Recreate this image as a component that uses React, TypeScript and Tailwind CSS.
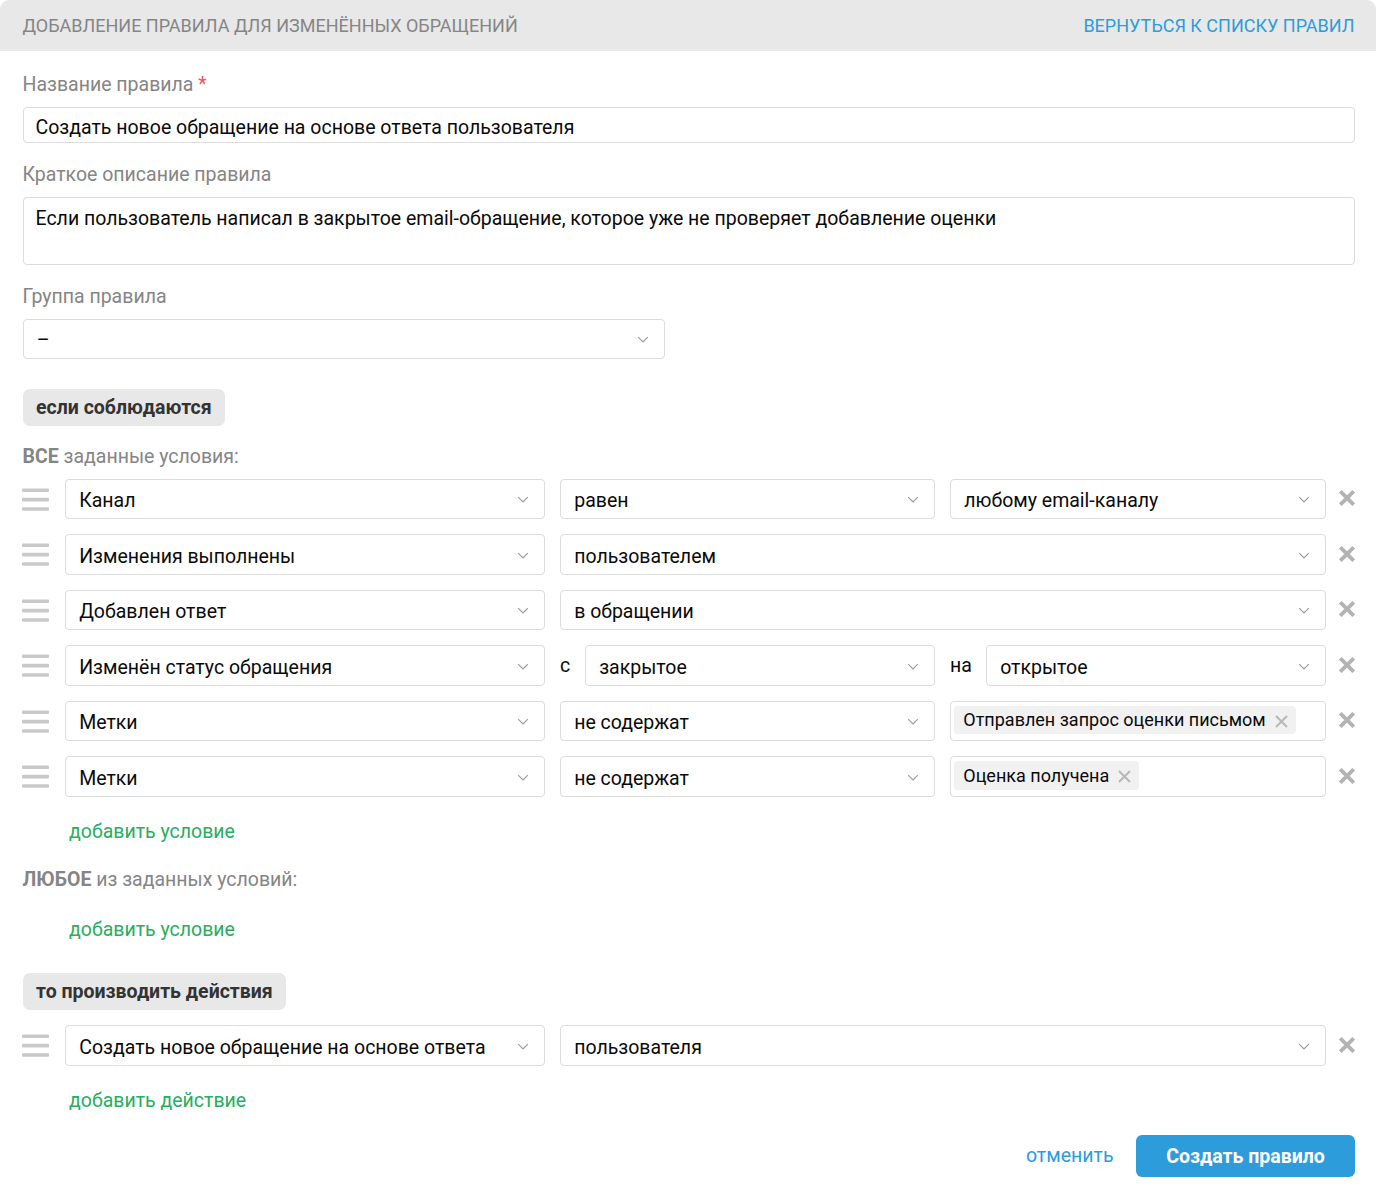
import type { ReactNode } from "react";
import clsx from "clsx";

interface Condition {
  field: string;
  operator?: string;
  value?: string;
  from?: string;
  to?: string;
  tag?: string;
}

const conditions: Condition[] = [
  { field: "Канал", operator: "равен", value: "любому email-каналу" },
  { field: "Изменения выполнены", value: "пользователем" },
  { field: "Добавлен ответ", value: "в обращении" },
  { field: "Изменён статус обращения", from: "закрытое", to: "открытое" },
  { field: "Метки", operator: "не содержат", tag: "Отправлен запрос оценки письмом" },
  { field: "Метки", operator: "не содержат", tag: "Оценка получена" },
];

function ChevronIcon() {
  return (
    <svg className="shrink-0" width="12" height="8" viewBox="0 0 12 8" fill="none">
      <path d="M1.2 1.2 6 6 10.8 1.2" stroke="#999999" strokeWidth="1.1" />
    </svg>
  );
}

function DragHandle() {
  return (
    <svg className="mt-[9px] -ml-px shrink-0" width="28" height="24" viewBox="0 0 28 24" fill="#c9c9c9">
      <rect x="0" y="0.4" width="27" height="3.6" rx="1" />
      <rect x="0" y="9.8" width="27" height="3.6" rx="1" />
      <rect x="0" y="19.2" width="27" height="3.6" rx="1" />
    </svg>
  );
}

function RemoveButton() {
  return (
    <button type="button" className="mt-[11.5px] ml-[13px] h-4 w-4 shrink-0">
      <svg width="16" height="16" viewBox="0 0 16 16" fill="none">
        <path d="M1.3 1.3 14.7 14.7M14.7 1.3 1.3 14.7" stroke="#b3b3b3" strokeWidth="3.8" />
      </svg>
    </button>
  );
}

function Select({ value, className }: { value: string; className?: string }) {
  return (
    <div className={clsx("flex h-[40.5px] justify-between rounded-[4px] border border-[#dcdcdc] bg-white pr-[15px] pl-[13.2px] text-[#0a0a0a]", className)}>
      <span className="pt-[9.5px] whitespace-nowrap">{value}</span>
      <span className="mt-[16.5px]">
        <ChevronIcon />
      </span>
    </div>
  );
}

function Tag({ label }: { label: string }) {
  return (
    <span className="flex h-[28.5px] items-center rounded-[4px] bg-[#f1f1f1] pr-[8px] pl-[9.3px] text-[18px] text-[#0a0a0a]">
      <span className="whitespace-nowrap">{label}</span>
      <svg className="mt-[2px] ml-[9.2px]" width="13" height="13" viewBox="0 0 13 13" fill="none">
        <path d="M1 1 12 12M12 1 1 12" stroke="#b8b8b8" strokeWidth="2" />
      </svg>
    </span>
  );
}

function Row({ children }: { children: ReactNode }) {
  return (
    <div className="flex h-[40.5px] items-start">
      <DragHandle />
      <div className="ml-[15.5px] flex flex-1 gap-[15px]">{children}</div>
      <RemoveButton />
    </div>
  );
}

function ConditionRow({ item }: { item: Condition }) {
  return (
    <Row>
      <Select value={item.field} className="w-[480px]" />
      {item.operator && <Select value={item.operator} className="w-[375px]" />}
      {item.from && (
        <div className="flex w-[375px] justify-between">
          <span className="pt-[8.5px] text-[#0a0a0a]">с</span>
          <Select value={item.from} className="w-[350px]" />
        </div>
      )}
      {item.to && (
        <div className="flex flex-1 justify-between">
          <span className="pt-[8.5px] text-[#0a0a0a]">на</span>
          <Select value={item.to} className="w-[340px]" />
        </div>
      )}
      {item.value && <Select value={item.value} className="flex-1" />}
      {item.tag && (
        <div className="flex h-[40.5px] flex-1 items-start rounded-[4px] border border-[#dcdcdc] pt-1 pl-[3px]">
          <Tag label={item.tag} />
        </div>
      )}
    </Row>
  );
}

function Badge({ children }: { children: ReactNode }) {
  return (
    <div className="h-[37px] w-fit rounded-[7px] bg-[#e8e8e8] px-[13.5px] pt-[7px] font-bold text-[#333333]">{children}</div>
  );
}

export default function App() {
  return (
    <div className="min-h-[1198px] bg-white font-[Roboto,sans-serif] text-[19.5px] leading-[24px] text-[#858585]">
      <header className="flex h-[51px] items-center justify-between rounded-t-[9px] bg-[#e8e8e8] pr-[21.5px] pl-[22.5px] text-[18px] uppercase">
        <h1>Добавление правила для изменённых обращений</h1>
        <a className="text-[#2d9cdb]">Вернуться к списку правил</a>
      </header>

      <main className="flex flex-col pr-[21px] pl-[22.5px]">
        {/* General settings */}
        <div className="pt-[22px] pb-[10px]">
          Название правила <span className="text-[#f2555a]">*</span>
        </div>
        <div className="h-[36px] rounded-[4px] border border-[#dcdcdc] px-3 pt-2 text-[#0a0a0a]">
          Создать новое обращение на основе ответа пользователя
        </div>
        <div className="pt-5 pb-[10px]">Краткое описание правила</div>
        <div className="h-[68px] rounded-[4px] border border-[#dcdcdc] px-3 pt-[9px] text-[#0a0a0a]">
          Если пользователь написал в закрытое email-обращение, которое уже не проверяет добавление оценки
        </div>
        <div className="pt-5 pb-[9.75px]">Группа правила</div>
        <Select value="–" className="w-[642px]" />

        {/* Conditions */}
        <div className="mt-[29.75px]">
          <Badge>если соблюдаются</Badge>
        </div>
        <div className="pt-[19px] pb-[9.75px]">
          <b>ВСЕ</b> заданные условия:
        </div>
        <div className="flex flex-col gap-[15px]">
          {conditions.map((item, i) => (
            <ConditionRow key={i} item={item} />
          ))}
        </div>
        <a className="mt-[23.25px] ml-[46.5px] text-[#27ae60]">добавить условие</a>
        <div className="mt-6">
          <b>ЛЮБОЕ</b> из заданных условий:
        </div>
        <a className="mt-[26px] ml-[46.5px] text-[#27ae60]">добавить условие</a>

        {/* Actions */}
        <div className="mt-[31px] mb-[15.25px]">
          <Badge>то производить действия</Badge>
        </div>
        <ConditionRow item={{ field: "Создать новое обращение на основе ответа", value: "пользователя" }} />
        <a className="mt-[22.75px] ml-[46.5px] text-[#27ae60]">добавить действие</a>

        <div className="mt-[22.5px] flex items-center justify-end gap-[22.5px]">
          <a className="text-[#2d9cdb]">отменить</a>
          <button type="button" className="h-[42px] w-[219px] rounded-[6px] bg-[#2d9cdb] pt-px font-bold text-white">
            Создать правило
          </button>
        </div>
      </main>
    </div>
  );
}
